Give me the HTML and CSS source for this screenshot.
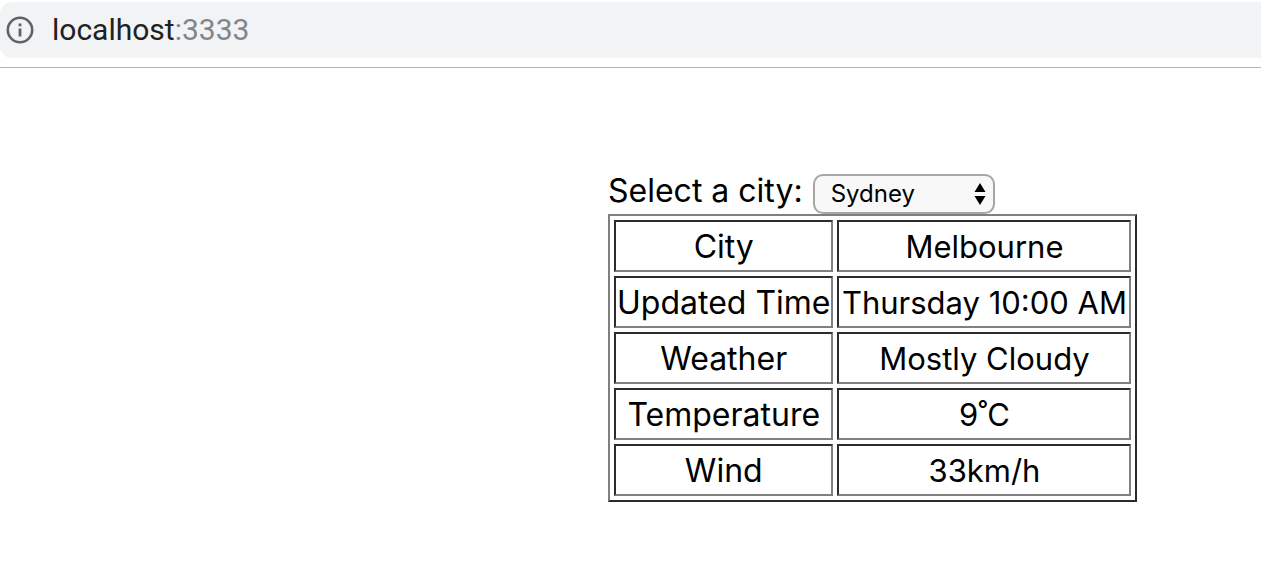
FILE: index.html
```
<!DOCTYPE html>
<html lang="en">
<head>
<meta charset="utf-8">
<meta name="viewport" content="width=device-width, initial-scale=1">
<title>Weather</title>
<link rel="stylesheet" href="styles.css">
</head>
<body>
<header class="toolbar">
  <div class="address">
    <svg class="info" viewBox="0 0 28 28" aria-hidden="true">
      <circle cx="14" cy="14" r="12.2" fill="none" stroke="#5f6368" stroke-width="2.6"/>
      <path d="M12.6 7.5h2.8v2.8h-2.8zM12.6 12.6h2.8v8h-2.8z" fill="#5f6368"/>
    </svg>
    <span class="host">localhost<span class="port">:3333</span></span>
  </div>
</header>
<main class="page">
  <div class="picker">
    <label for="city">Select a city:</label>
    <span class="select-box">
      <select id="city" class="select">
        <option>Sydney</option>
        <option>Melbourne</option>
      </select>
      <svg class="arrows" viewBox="0 0 12 22" aria-hidden="true">
        <path d="M6 0l5.5 9H.5zM6 22l5.5-9H.5z" fill="#000"/>
      </svg>
    </span>
  </div>
  <table class="weather">
    <tbody>
      <tr><th scope="row" class="name">City</th><td class="value">Melbourne</td></tr>
      <tr><th scope="row" class="name">Updated Time</th><td class="value">Thursday 10:00 AM</td></tr>
      <tr><th scope="row" class="name">Weather</th><td class="value">Mostly Cloudy</td></tr>
      <tr><th scope="row" class="name">Temperature</th><td class="value">9˚C</td></tr>
      <tr><th scope="row" class="name">Wind</th><td class="value">33km/h</td></tr>
    </tbody>
  </table>
</main>
</body>
</html>
```
FILE: styles.css
```
* { box-sizing: border-box; }
body {
  margin: 0;
  background: #fff;
  color: #000;
  font: 32px/46px Inter, "Noto Sans", sans-serif;
}
.toolbar {
  padding: 2px 0 9px;
  border-bottom: 1px solid #b4b4b4;
}
.address {
  display: flex;
  align-items: center;
  gap: 18px;
  height: 56px;
  padding-left: 6px;
  background: #f1f3f4;
  border-radius: 12px 0 0 12px;
}
.info { width: 28px; height: 28px; }
.host {
  font: 30px/40px Roboto, sans-serif;
  color: #202124;
}
.port { color: #80868b; }
.page { padding: 100px 0 60px 608px; }
.picker {
  display: flex;
  align-items: center;
  gap: 10px;
}
.select-box {
  position: relative;
  display: flex;
  margin-top: 6px;
}
.select {
  appearance: none;
  width: 182px;
  height: 40px;
  padding: 0 36px 0 16px;
  border: 2px solid #a6a6a6;
  border-radius: 10px;
  background: #f8f8f8;
  color: #000;
  font: 24px/32px Inter, "Noto Sans", sans-serif;
}
.arrows {
  position: absolute;
  top: 9px;
  right: 9px;
  width: 12px;
  height: 22px;
  pointer-events: none;
}
.weather {
  border: 2px solid;
  border-color: #808080 #2b2b2b #2b2b2b #808080;
  border-spacing: 4px;
}
.name,
.value {
  padding: 2px 1px 0;
  border: 2px solid;
  border-color: #2b2b2b #808080 #808080 #2b2b2b;
  font-weight: 400;
  text-align: center;
  white-space: nowrap;
}
.name { min-width: 218px; }
.value {
  min-width: 294px;
  font-size: 31px;
}
```
